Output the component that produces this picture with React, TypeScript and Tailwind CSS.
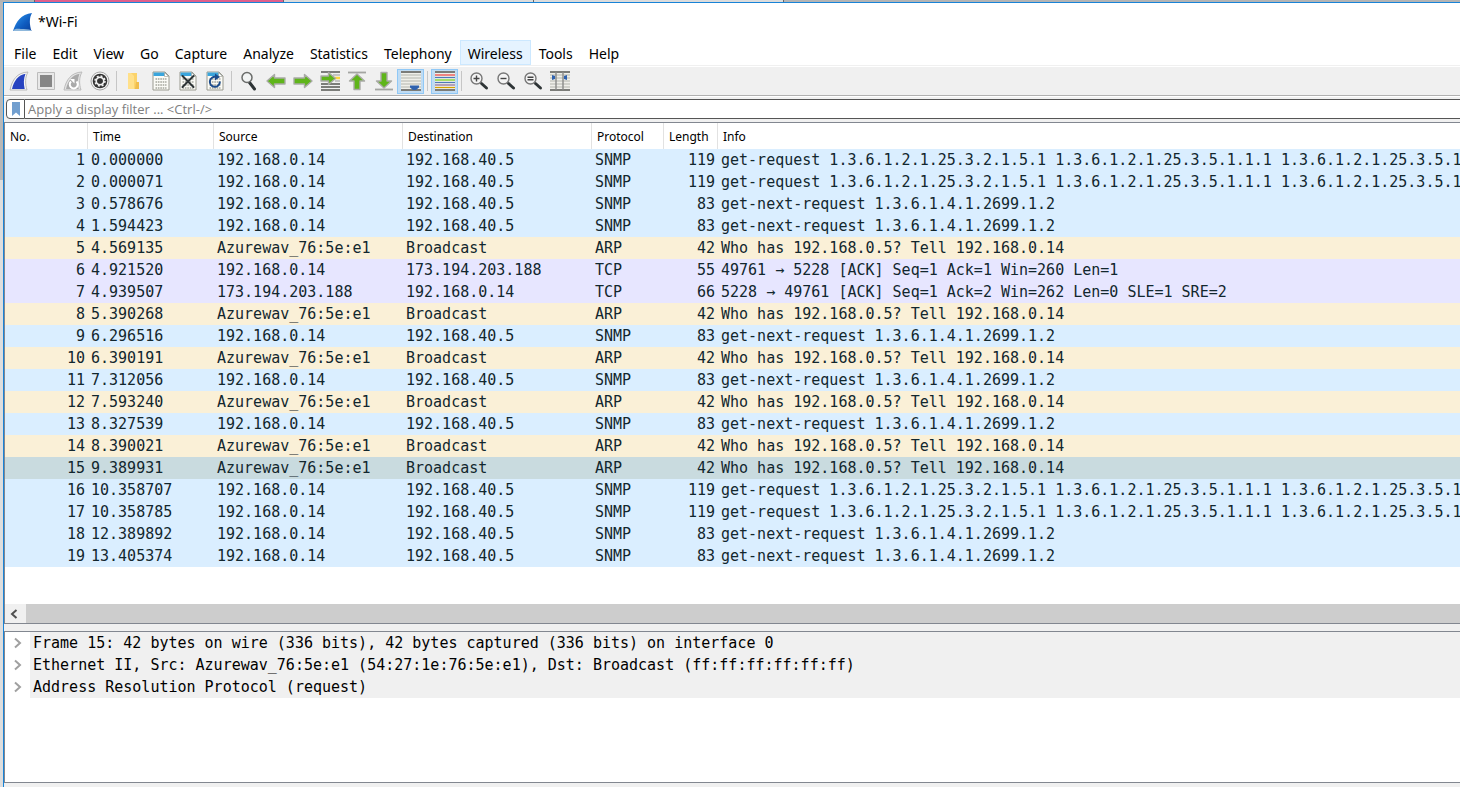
import { ReactNode } from "react";
import clsx from "clsx";

type Packet = {
    time: string
    source: string
    destination: string
    protocol: "SNMP" | "ARP" | "TCP"
    length: number
    info: string
}

const printerQuery = "get-request 1.3.6.1.2.1.25.3.2.1.5.1 1.3.6.1.2.1.25.3.5.1.1.1 1.3.6.1.2.1.25.3.5.1"
const nextQuery = "get-next-request 1.3.6.1.4.1.2699.1.2"

function snmp(time: string, length: number): Packet {
    return {time, source: "192.168.0.14", destination: "192.168.40.5", protocol: "SNMP", length, info: length === 119 ? printerQuery : nextQuery}
}

function arp(time: string): Packet {
    return {time, source: "Azurewav_76:5e:e1", destination: "Broadcast", protocol: "ARP", length: 42, info: "Who has 192.168.0.5? Tell 192.168.0.14"}
}

const packets: Packet[] = [
    snmp("0.000000", 119),
    snmp("0.000071", 119),
    snmp("0.578676", 83),
    snmp("1.594423", 83),
    arp("4.569135"),
    {time: "4.921520", source: "192.168.0.14", destination: "173.194.203.188", protocol: "TCP", length: 55, info: "49761 → 5228 [ACK] Seq=1 Ack=1 Win=260 Len=1"},
    {time: "4.939507", source: "173.194.203.188", destination: "192.168.0.14", protocol: "TCP", length: 66, info: "5228 → 49761 [ACK] Seq=1 Ack=2 Win=262 Len=0 SLE=1 SRE=2"},
    arp("5.390268"),
    snmp("6.296516", 83),
    arp("6.390191"),
    snmp("7.312056", 83),
    arp("7.593240"),
    snmp("8.327539", 83),
    arp("8.390021"),
    arp("9.389931"),
    snmp("10.358707", 119),
    snmp("10.358785", 119),
    snmp("12.389892", 83),
    snmp("13.405374", 83),
]

const selectedPacket = 15

const rowColors = {
    SNMP: "bg-[#daeeff]",
    ARP: "bg-[#faf0d7]",
    TCP: "bg-[#e7e6ff]",
}

const menus = ["File", "Edit", "View", "Go", "Capture", "Analyze", "Statistics", "Telephony", "Wireless", "Tools", "Help"]

const columns = [
    {name: "No.", width: "w-[83px]"},
    {name: "Time", width: "w-[126px]"},
    {name: "Source", width: "w-[189px]"},
    {name: "Destination", width: "w-[189px]"},
    {name: "Protocol", width: "w-[72px]"},
    {name: "Length", width: "w-[54px]"},
    {name: "Info", width: ""},
]

const details = [
    "Frame 15: 42 bytes on wire (336 bits), 42 bytes captured (336 bits) on interface 0",
    "Ethernet II, Src: Azurewav_76:5e:e1 (54:27:1e:76:5e:e1), Dst: Broadcast (ff:ff:ff:ff:ff:ff)",
    "Address Resolution Protocol (request)",
]

function Icon({children}: {children: ReactNode}) {
    return <svg viewBox="0 0 20 20" className="size-5" aria-hidden="true">{children}</svg>
}

function DocumentIcon({children}: {children?: ReactNode}) {
    return (
        <Icon>
            <path d="M2 1h12l4 4v14H2z" fill="#fbfbf6" stroke="#9a9a90" />
            <path d="M2.5 1.5h11.2l3 3.5H2.5z" fill="#3aa5dc" />
            <path d="M13.5 1.5v4h4z" fill="#fff" stroke="#9a9a90" strokeWidth=".6" />
            <path d="M4.500 8h11M4.500 11h11M4.500 14h11M4.500 17h11" stroke="#b9bab2" strokeWidth="1.800" strokeDasharray="1.600 .800" />
            {children}
        </Icon>
    )
}

const arrowProps = {fill: "#5fb51a", stroke: "#a9aaa6", strokeWidth: 1.4, strokeLinejoin: "round" as const}

function MagnifierIcon({sign}: {sign: string}) {
    return (
        <Icon>
            <path d="m12.500 12.500 5 4.500" stroke="#2e3436" strokeWidth="3" strokeLinecap="round" />
            <circle cx="7.500" cy="7.500" r="5.500" fill="#f4f4f4" stroke="#777" strokeWidth="1.400" />
            <path d={sign} stroke="#444" strokeWidth="1.400" />
        </Icon>
    )
}

function Lines({colors}: {colors: string[]}) {
    const step = 15 / colors.length
    return (
        <>
            <path d="M0 0h20v20H0z" fill="#efefe9" />
            {colors.map((color, i) => <path key={i} d={`M0 ${4 + i * step}h20`} stroke={color} strokeWidth="1.2" />)}
            <path d="M0 1h20M0 19h20" stroke="#555753" strokeWidth="1.4" />
        </>
    )
}

const gray = "#bdbeb8"

const tools: {label: string, icon: ReactNode, pressed?: boolean, separated?: boolean}[] = [
    {label: "Start capture", icon: (
        <Icon>
            <path d="M1 19C3 9 8 1.500 19 1c-3 5-3 12-1 18z" fill="#f6f6f6" stroke="#b9b9b9" />
            <path d="M3 18C5 10 9 4 16.500 2.800c-2 5-2 10-.8 15.200z" fill="#2743c0" />
        </Icon>
    )},
    {label: "Stop capture", icon: (
        <Icon>
            <path d="M1.500 1.500h17v17h-17z" fill="#e8e8e8" stroke="#bcbcbc" />
            <path d="M4 4h12v12H4z" fill="#868686" />
        </Icon>
    )},
    {label: "Restart capture", icon: (
        <Icon>
            <path d="M1 19C3 9 8 1.500 19 1c-3 5-3 12-1 18z" fill="#e4e4e4" stroke="#bcbcbc" />
            <path d="M3 18C5 10 9 4 16.500 2.800c-2 5-2 10-.8 15.200z" fill="#aaa" />
            <path d="M8 10.500a4 4 0 1 0 5.500 0" fill="none" stroke="#fff" strokeWidth="2" />
            <path d="M7 8h4.500v4.500z" fill="#fff" />
        </Icon>
    )},
    {label: "Capture options", icon: (
        <Icon>
            <circle cx="10" cy="10" r="9" fill="#f2f2f2" stroke="#a5a5a5" />
            <circle cx="10" cy="10" r="7.300" fill="#333" />
            <circle cx="10" cy="10" r="3.700" fill="none" stroke="#f2f2f2" strokeWidth="1.800" />
            <circle cx="10" cy="10" r="5" fill="none" stroke="#f2f2f2" strokeWidth="1.500" strokeDasharray="1.960 1.960" />
            <circle cx="10" cy="10" r="2.600" fill="#333" />
        </Icon>
    )},
    {label: "Open", separated: true, icon: (
        <Icon>
            <path d="M4 2h9v16H4z" fill="#fbd36b" />
            <path d="M4 2h3l3 3v13H4z" fill="#ffe08a" />
            <path d="M12 11h3v7h-4z" fill="#f0bd4c" />
        </Icon>
    )},
    {label: "Save", icon: <DocumentIcon />},
    {label: "Close", icon: <DocumentIcon><path d="m4.500 5 11 11m0-11-11 11" stroke="#2e3436" strokeWidth="2" strokeLinecap="round" /></DocumentIcon>},
    {label: "Reload", icon: <DocumentIcon><path d="M14.800 10.500A5 5 0 1 1 11 6" fill="none" stroke="#1d4c8c" strokeWidth="2" /><path d="M10 2.500l5 3.500-5 3.500z" fill="#1d4c8c" /></DocumentIcon>},
    {label: "Find packet", separated: true, icon: (
        <Icon>
            <path d="m10.500 11.500 5 6.500" stroke="#2e3436" strokeWidth="3" strokeLinecap="round" />
            <circle cx="8" cy="6.500" r="5" fill="#f2f4f4" stroke="#6a6c6a" strokeWidth="1.500" />
        </Icon>
    )},
    {label: "Previous packet", icon: <Icon><path d="M1 10l7.500-6.500v3.500h10.500v6H8.500v3.500z" {...arrowProps} /></Icon>},
    {label: "Next packet", icon: <Icon><path d="M19 10l-7.500-6.500v3.500H1v6h10.500v3.500z" {...arrowProps} /></Icon>},
    {label: "Go to packet", icon: (
        <Icon>
            <path d="M1 1h19M1 13h19M1 16h19M1 19h19" stroke="#555753" strokeWidth="1.400" />
            <path d="M13 4h7M15 10h5" stroke="#999" />
            <path d="M14 7h6" stroke="#fcd53f" strokeWidth="2.500" />
            <path d="M15.500 7.500l-7-6v3.500H1v5h7.500v3.500z" {...arrowProps} />
        </Icon>
    )},
    {label: "First packet", icon: <Icon><path d="M1 1.500h18" stroke="#a4a5a2" strokeWidth="1.800" /><path d="M10 3l7.500 7H13v8.500H7V10H2.500z" {...arrowProps} /></Icon>},
    {label: "Last packet", icon: <Icon><path d="M1 18.500h18" stroke="#a4a5a2" strokeWidth="1.800" /><path d="M10 17l7.500-7H13V1.500H7V10H2.500z" {...arrowProps} /></Icon>},
    {label: "Auto scroll", pressed: true, icon: (
        <Icon>
            <Lines colors={[gray, gray, gray, gray, gray]} />
            <path d="M9 14.500h9v2L15 19h-3l-3-2.500z" fill="#2f62ae" />
        </Icon>
    )},
    {label: "Colorize", pressed: true, separated: true, icon: <Icon><Lines colors={["#ef3b3b", "#4f79b8", "#73d216", "#4f79b8", "#8a6a9a", "#d6a100"]} /></Icon>},
    {label: "Zoom in", separated: true, icon: <MagnifierIcon sign="M4.500 7.500h6M7.500 4.500v6" />},
    {label: "Zoom out", icon: <MagnifierIcon sign="M4.500 7.500h6" />},
    {label: "Normal size", icon: <MagnifierIcon sign="M4.500 6.300h6M4.500 8.800h6" />},
    {label: "Resize columns", icon: (
        <Icon>
            <Lines colors={[gray, gray, gray, gray, gray]} />
            <path d="M6 1v18M13 1v18" stroke="#8a8b88" strokeWidth="1.400" />
            <path d="M2 4v5l3-1V5zM17 4v5l-3-1V5z" fill="#2f62ae" />
        </Icon>
    )},
]

function TitleBar() {
    return (
        <div className="flex h-[37px] items-center gap-1 pl-2">
            <svg viewBox="0 0 22 20" className="h-5 w-[22px]" aria-hidden="true">
                <defs>
                    <linearGradient id="fin" x1="0" y1="0" x2="1" y2="1">
                        <stop offset="0" stopColor="#2f9bf0" />
                        <stop offset=".6" stopColor="#0f5cc0" />
                        <stop offset="1" stopColor="#0a3f9a" />
                    </linearGradient>
                </defs>
                <path d="M1 19C4 10 9 2 20 1c-3 5-2.500 12-.5 18z" fill="url(#fin)" />
                <path d="M1 19c2-3 5-2 8-2s7 0 10 1l.5 1z" fill="#8fb8dc" />
            </svg>
            <h1 className="text-sm">*Wi-Fi</h1>
        </div>
    )
}

function PacketTable() {
    return (
        <table className="w-full table-fixed border-separate border-spacing-0">
            <thead>
                <tr className="h-[26px]">
                    {columns.map((column) => (
                        <th key={column.name} scope="col" className={clsx("border-r border-[#e2e2e2] p-0 pt-px pl-[5px] text-left font-['Noto_Sans',sans-serif] text-xs font-normal text-black last:border-r-0", column.width)}>
                            {column.name}
                        </th>
                    ))}
                </tr>
            </thead>
            <tbody className="font-['DejaVu_Sans_Mono',monospace] text-[15px] leading-[22px] text-[#12272e]">
                {packets.map((packet, i) => (
                    <tr key={i} aria-selected={i + 1 === selectedPacket} className={clsx("h-[22px]", i + 1 === selectedPacket ? "bg-[#c9dbdf]" : rowColors[packet.protocol])}>
                        <td className="p-0 pr-[3px] text-right">{i + 1}</td>
                        <td className="p-0 pl-[3px]">{packet.time}</td>
                        <td className="p-0 pl-[3px]">{packet.source}</td>
                        <td className="p-0 pl-[3px]">{packet.destination}</td>
                        <td className="p-0 pl-[3px]">{packet.protocol}</td>
                        <td className="p-0 pr-[3px] text-right">{packet.length}</td>
                        <td className="overflow-hidden p-0 pl-[3px] whitespace-nowrap">{packet.info}</td>
                    </tr>
                ))}
            </tbody>
        </table>
    )
}

export default function App() {
    return (
        <div className="flex h-screen flex-col overflow-hidden bg-[linear-gradient(#b8b8b8_180px,#dedede_180px)] font-['Noto_Sans',sans-serif] text-black">
            {/* Edge of the windows lying behind */}
            <div className="flex h-[2px] shrink-0 bg-[#b4b4b4] pl-[34px]">
                <div className="w-[250px] border-x border-[#666] bg-[#e0608c]" />
                <div className="w-[250px] border-r border-[#666] bg-[#dcdcdc]" />
                <div className="w-[250px] border-r border-[#666] bg-[#dcdcdc]" />
            </div>

            <div className="ml-[3px] flex min-h-0 grow flex-col border-t border-l border-[#1883d7] bg-[#f0f0f0]">
                <header className="bg-white">
                    <TitleBar />
                    <nav className="flex h-[25px] pl-0.5">
                        {menus.map((menu) => (
                            <button key={menu} className={clsx("border px-[7px] pt-[2px] text-sm", menu === "Wireless" ? "border-[#cce8ff] bg-[#e5f3ff]" : "border-transparent")}>{menu}</button>
                        ))}
                    </nav>
                </header>

                <div role="toolbar" className="mt-px flex h-[30px] shrink-0 items-center border-t border-b border-t-white border-b-[#b0b0b0] pl-px">
                    {tools.map((tool) => (
                        <div key={tool.label} className="flex items-center">
                            {tool.separated && <span className="mx-[3px] h-5 w-px bg-[#c6c6c6]" />}
                            <button aria-label={tool.label} aria-pressed={tool.pressed} className={clsx("flex h-[25px] w-[27px] items-center justify-center", tool.pressed && "border border-[#90c8f6] bg-[#c0dcf3]")}>
                                {tool.icon}
                            </button>
                        </div>
                    ))}
                </div>

                <div className="flex h-[26px] shrink-0 border-t border-white pt-[2px] pb-[3px] pl-[2px]">
                    <label htmlFor="display-filter" className="flex w-[19px] items-center justify-center rounded-l border border-[#555] bg-white">
                        <svg viewBox="0 0 10 14" className="h-[14px] w-[10px]" role="img" aria-label="Display filter">
                            <path d="M1 0h8v14l-4-3.500L1 14z" fill="#729fcf" />
                        </svg>
                    </label>
                    <input id="display-filter" type="text" placeholder="Apply a display filter ... <Ctrl-/>" className="min-w-0 grow border-y border-[#555] bg-white pt-px pl-[3px] font-['Open_Sans',sans-serif] text-[13px] placeholder:text-[#808080]" />
                </div>

                <main className="flex min-h-0 grow flex-col">
                    <section className="flex flex-col border-t border-b border-l border-[#828790] bg-white">
                        <PacketTable />
                        <div className="mt-[37px] flex h-[19px] bg-[#cdcdcd]">
                            <button aria-label="Scroll left" className="flex w-[21px] items-center justify-center bg-[#f0f0f0] pr-[3px]">
                                <svg viewBox="0 0 8 10" className="h-[10px] w-2" aria-hidden="true">
                                    <path d="M6.500 1 2 5l4.500 4" fill="none" stroke="#505050" strokeWidth="2" />
                                </svg>
                            </button>
                        </div>
                    </section>

                    <section className="mt-[7px] mb-1 grow border-t border-b border-l border-[#828790] bg-white">
                        <ul className="font-['DejaVu_Sans_Mono',monospace] text-[15px] leading-[22px]">
                            {details.map((detail) => (
                                <li key={detail} className="flex">
                                    <button aria-label="Expand" className="flex w-[25px] items-center justify-center">
                                        <svg viewBox="0 0 8 12" className="h-3 w-2" aria-hidden="true">
                                            <path d="m1 1.500 5 4.500-5 4.500" fill="none" stroke="#a0a0a0" strokeWidth="2" />
                                        </svg>
                                    </button>
                                    <span className="grow bg-[#f0f0f0] pl-[3px]">{detail}</span>
                                </li>
                            ))}
                        </ul>
                    </section>
                </main>
            </div>
        </div>
    )
}
